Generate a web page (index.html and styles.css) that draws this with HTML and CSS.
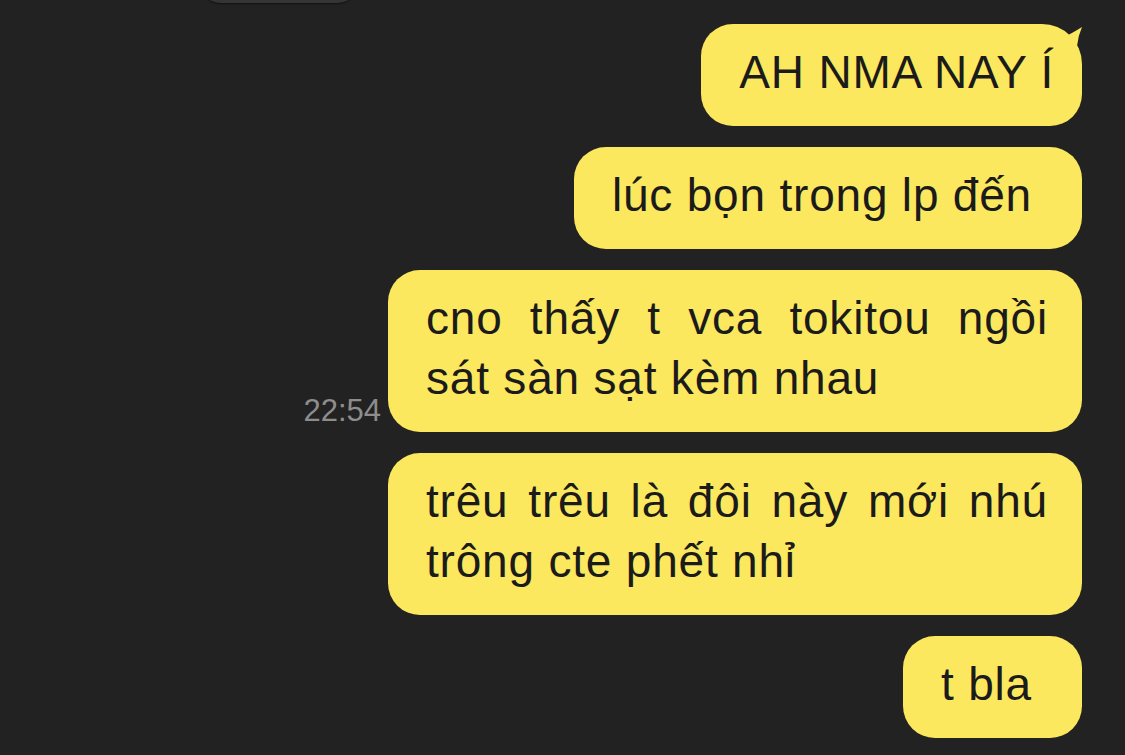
FILE: index.html
```html
<!DOCTYPE html>
<html lang="vi">
<head>
    <meta charset="UTF-8">
    <meta name="viewport" content="width=device-width, initial-scale=1.0">
    <title>Chat</title>
    <link rel="stylesheet" href="styles.css">
</head>
<body>

<div class="chat">
    <!-- bout du message precedent, coupe en haut -->
    <div class="prev"></div>

    <div class="row">
        <div class="bubble first">
            AH NMA NAY Í
            <svg class="tail" width="40" height="34" viewBox="0 0 40 34">
                <path d="M15 14 Q24 10 35 3 Q31 12 30 22 L30 34 L12 34 Z" fill="#fbe85e"/>
            </svg>
        </div>
    </div>

    <div class="row">
        <div class="bubble">lúc bọn trong lp đến</div>
    </div>

    <div class="row">
        <span class="time">22:54</span>
        <div class="bubble wide">
            <span class="just">cno thấy t vca tokitou ngồi</span>
            <span>sát sàn sạt kèm nhau</span>
        </div>
    </div>

    <div class="row">
        <div class="bubble wide">
            <span class="just">trêu trêu là đôi này mới nhú</span>
            <span>trông cte phết nhỉ</span>
        </div>
    </div>

    <div class="row">
        <div class="bubble">t bla</div>
    </div>
</div>

</body>
</html>
```

FILE: styles.css
```css
body {
    margin: 0;
    background-color: #222222;
    font-family: "Liberation Sans", Arial, sans-serif;
    overflow: hidden;
}

.chat {
    display: flex;
    flex-direction: column;
    gap: 21px;
    padding-right: 43px;
}

.prev {
    width: 160px;
    height: 44px;
    margin-top: -41px;
    margin-left: 199px;
    background-color: #353535;
    border-radius: 22px;
    box-shadow: 0 1px 2px rgba(0, 0, 0, .5);
}

.row {
    display: flex;
    justify-content: flex-end;
    align-items: flex-end;
    gap: 7px;
}

.bubble {
    position: relative;
    background-color: #fbe85e;
    color: #1b1b1b;
    font-size: 46px;
    letter-spacing: 0.8px;
    line-height: 60px;
    padding: 18px 50px 24px 38px;
    border-radius: 32px;
    white-space: nowrap;
}

.bubble.first {
    padding-right: 28px;
    border-top-right-radius: 40px;
}

.tail {
    position: absolute;
    top: 0;
    right: -5px;
}

.bubble.wide {
    width: 694px;
    box-sizing: border-box;
    padding-right: 34px;
}

.bubble.wide span {
    display: block;
}

.just {
    text-align: justify;
    text-align-last: justify;
}

.time {
    color: #8d8d8d;
    font-size: 31px;
    padding-bottom: 3px;
}
```
